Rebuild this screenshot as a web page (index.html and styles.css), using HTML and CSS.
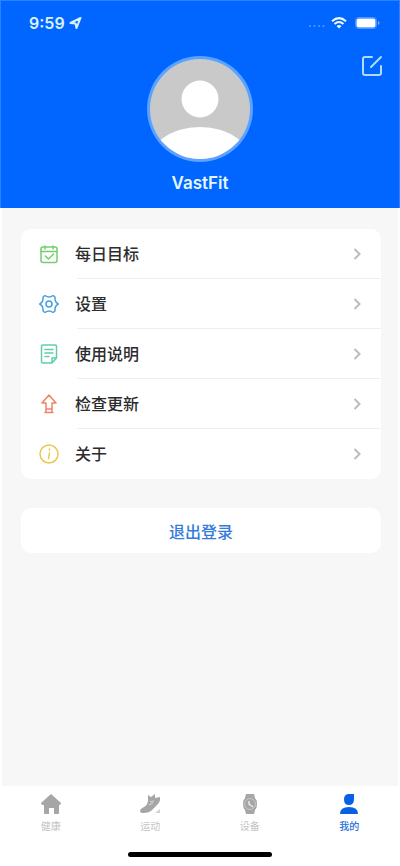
FILE: index.html
```html
<!DOCTYPE html>
<html lang="zh-CN">
<head>
<meta charset="utf-8">
<meta name="viewport" content="width=device-width, initial-scale=1">
<title>VastFit</title>
<link rel="stylesheet" href="styles.css">
</head>
<body>
<header class="hero">
  <div class="status">
    <span class="time">9:59</span>
    <svg class="location" width="13" height="12" viewBox="0 0 12 12"><path d="M1 6 11 1 7 11 6 6.500Z" fill="none" stroke="currentColor" stroke-width="2" stroke-linejoin="round"/></svg>
    <svg class="signal" width="18" height="4" viewBox="0 0 18 4" fill="currentColor"><circle cx="2" cy="2" r="1"/><circle cx="6.500" cy="2" r="1"/><circle cx="11" cy="2" r="1"/><circle cx="15.500" cy="2" r="1"/></svg>
    <svg class="wifi" width="16" height="12" viewBox="0 0 16 12" fill="none" stroke="currentColor" stroke-width="2"><path d="M1 4.300Q8-2 15 4.300M3.500 7Q8 3 12.500 7"/><path d="M5.500 9Q8 7 10.500 9L8 11.500Z" fill="currentColor" stroke="none"/></svg>
    <svg class="battery" width="25" height="12" viewBox="0 0 25 12"><rect x=".5" y=".5" width="21" height="11" rx="3" fill="none" stroke="#4c97ff"/><rect x="1.500" y="1.500" width="19" height="9" rx="2" fill="#fff"/><path d="M23 4v4q1.500-.5 1.500-2T23 4Z" fill="#7db4ff"/></svg>
  </div>
  <button class="edit" aria-label="编辑">
    <svg width="22" height="22" viewBox="0 0 22 22" fill="none" stroke="currentColor" stroke-width="2" stroke-linecap="round" stroke-linejoin="round"><path d="M11 2H4Q2 2 2 4v14q0 2 2 2h14q2 0 2-2v-7M10 12 20 2"/></svg>
  </button>
  <div class="profile">
    <svg class="avatar" width="106" height="106" viewBox="0 0 106 106"><defs><clipPath id="face"><circle cx="53" cy="53" r="50"/></clipPath></defs><circle cx="53" cy="53" r="53" fill="#5ba2ff"/><g clip-path="url(#face)"><path fill="#c9c9c9" d="M0 0h106v106H0z"/><circle cx="53" cy="43" r="18.500" fill="#fff"/><ellipse cx="53" cy="112" rx="54" ry="41" fill="#fff"/></g></svg>
    <h1 class="name">VastFit</h1>
  </div>
</header>
<main class="content">
  <nav class="menu">
    <a class="row" href="#goal"><svg class="icon green" viewBox="0 0 20 20"><rect x="2" y="3" width="16" height="15.500" rx="2"/><path d="M2 7.500h16M6 2v3M14 2v3M6.500 12l3 3 5-5"/></svg><span class="label">每日目标</span><svg class="chevron" viewBox="0 0 8 12"><path d="m1.500 1 5 5-5 5"/></svg></a>
    <a class="row" href="#settings"><svg class="icon blue" viewBox="0 0 20 20"><path d="M6 1.500Q10 4.500 14 1.500L16 3Q15.500 8 19.300 10 15.500 12 16 17l-2 1.500Q10 15.500 6 18.500L4 17Q4.500 12 .7 10 4.500 8 4 3Z"/><circle cx="10" cy="10" r="3"/></svg><span class="label">设置</span><svg class="chevron" viewBox="0 0 8 12"><path d="m1.500 1 5 5-5 5"/></svg></a>
    <a class="row" href="#manual"><svg class="icon mint" viewBox="0 0 20 20"><path d="M4 1h12q1.500 0 1.500 1.500V14L13 19H4q-1.500 0-1.500-1.500v-15Q2.500 1 4 1ZM13 19v-5h4.500M6 5.500h8M6 9h8M6 12.500h4"/></svg><span class="label">使用说明</span><svg class="chevron" viewBox="0 0 8 12"><path d="m1.500 1 5 5-5 5"/></svg></a>
    <a class="row" href="#update"><svg class="icon red" viewBox="0 0 20 20"><path d="m10 1 7 8h-4v6H7V9H3ZM6 18.500h8M7 15v3M13 15v3"/></svg><span class="label">检查更新</span><svg class="chevron" viewBox="0 0 8 12"><path d="m1.500 1 5 5-5 5"/></svg></a>
    <a class="row" href="#about"><svg class="icon yellow" viewBox="0 0 20 20"><circle cx="10" cy="10" r="9"/><path d="M10.500 5v1M10.500 9l-1 5.500"/></svg><span class="label">关于</span><svg class="chevron" viewBox="0 0 8 12"><path d="m1.500 1 5 5-5 5"/></svg></a>
  </nav>
  <button class="logout">退出登录</button>
</main>
<footer class="bottom">
  <nav class="tabs">
    <a class="tab" href="#health"><svg viewBox="0 0 20 20"><path d="M10 0 20 9q0 2-2 2v8q0 1-1 1h-4v-6H8v6H4q-1 0-1-1v-8Q0 11 0 9Z"/></svg><span>健康</span></a>
    <a class="tab" href="#sport"><svg viewBox="0 0 20 20"><path d="M8 6V1l3 2 4-3v4l5-1q1 4-3 8l-6 6q-3 2-7 2-4 0-4-2 0-2 4-4 4-2 4-7Z"/><path d="M15 19l5-4v4Z" opacity=".5"/><path d="m9 11 4-2M10 8l4-1" fill="none" stroke="#ddd"/></svg><span>运动</span></a>
    <a class="tab" href="#device"><svg viewBox="0 0 20 20"><path d="M6 0h8l1 4q2 2 2 6t-2 6l-1 4H6l-1-4q-2-2-2-6t2-6Z"/><circle cx="10" cy="10" r="5.500" fill="none" stroke="#c8c8c8"/><path d="M9 7v3l4 3" fill="none" stroke="#e8e8e8" stroke-width="1.500"/></svg><span>设备</span></a>
    <a class="tab active" href="#me" aria-current="page"><svg viewBox="0 0 20 20"><path d="M10 0h5v5q0 6-5 6-5 0-5-5.500T10 0ZM1 20q0-7 9-7t9 7Z"/></svg><span>我的</span></a>
  </nav>
  <div class="home-bar"></div>
</footer>
</body>
</html>
```
FILE: styles.css
```css
* { box-sizing: border-box; }

body {
  margin: 0;
  min-height: 100vh;
  display: flex;
  flex-direction: column;
  background: #fff;
  color: #2c2c2c;
  font-family: Inter, "Noto Sans CJK SC", sans-serif;
}

a { color: inherit; text-decoration: none; }
button { border: 0; font: inherit; cursor: pointer; }
svg { display: block; flex: none; }

.hero {
  position: relative;
  height: 208px;
  background: #0066ff;
  border: 1px solid #2b82ff;
  border-bottom: 0;
  color: #fff;
}

.status {
  display: flex;
  align-items: center;
  height: 44px;
  padding: 0 19px 0 28px;
  color: #d8f1ff;
}
.time { font-size: 16px; line-height: 20px; font-weight: 600; }
.location { margin-left: 4px; }
.signal { margin-left: auto; color: #559dff; margin-top: 6px; }
.wifi { margin-left: 5px; color: #f0faff; }
.battery { margin-left: 8px; }

.edit {
  position: absolute;
  top: 54px;
  right: 16px;
  padding: 0;
  background: none;
  color: #aedcff;
}

.profile {
  display: flex;
  flex-direction: column;
  align-items: center;
  gap: 11px;
  margin-top: 11px;
}
.name { margin: 0; font-size: 17px; line-height: 20px; font-weight: 600; color: #e4f6ff; }

.content {
  flex: 1;
  padding: 21px 17px 32px 19px;
  background: #f7f7f7;
  border: solid #fff;
  border-width: 0 2px;
}

.menu { background: #fff; border-radius: 10px; }
.row {
  position: relative;
  display: flex;
  align-items: center;
  height: 50px;
  padding: 0 20px 0 18px;
}
.row + .row::before {
  content: "";
  position: absolute;
  top: -1px;
  left: 56px;
  right: 0;
  border-top: 1px solid #efefef;
}
.label { flex: 1; margin-left: 16px; font-size: 16px; line-height: 24px; font-weight: 500; }
.icon { width: 20px; height: 20px; fill: none; stroke: currentColor; stroke-width: 1.5; stroke-linejoin: round; stroke-linecap: round; }
.green { color: #73cf70; }
.blue { color: #45a0df; }
.mint { color: #61cdaa; }
.red { color: #f08269; }
.yellow { color: #edc74f; }
.chevron { width: 8px; height: 12px; fill: none; stroke: #bcbcbc; stroke-width: 2; }

.logout {
  display: block;
  width: 100%;
  height: 45px;
  margin-top: 29px;
  border-radius: 10px;
  background: #fff;
  color: #347bdc;
  font-size: 16px;
  font-weight: 500;
}

.bottom { background: #fff; }
.tabs { display: grid; grid-template-columns: repeat(4, 1fr); padding: 8px 1px 0; }
.tab {
  display: flex;
  flex-direction: column;
  align-items: center;
  gap: 4px;
  color: #c4c4c4;
  font-size: 10px;
  line-height: 16px;
}
.tab svg { width: 20px; height: 20px; fill: #a6a6a6; }
.active { color: #2871e0; font-weight: 500; }
.active svg { fill: #0860e4; }
.home-bar {
  width: 36%;
  height: 5px;
  margin: 18px auto 9px;
  border-radius: 3px;
  background: #000;
}
```
